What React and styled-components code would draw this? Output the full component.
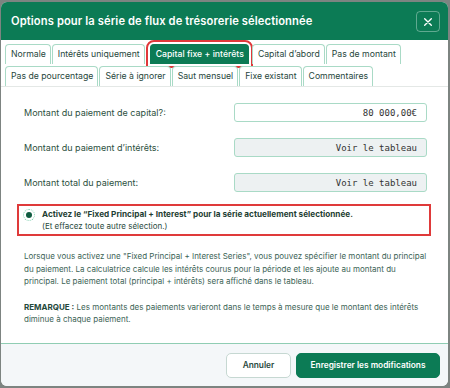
import React from 'react';
import styled, { createGlobalStyle } from 'styled-components';

const GlobalStyle = createGlobalStyle`
  html, body {
    margin: 0;
    padding: 0;
    background: #7d8481;
    font-family: Inter, "Noto Sans", sans-serif;
  }
`;

const Page = styled.div`
  width: 450px;
  height: 388px;
  padding: 2px 2px 2px 1px;
  box-sizing: border-box;
`;

const Modal = styled.div`
  height: 100%;
  background: #fff;
  border-radius: 6px;
  overflow: hidden;
  display: flex;
  flex-direction: column;
`;

const Header = styled.div`
  background: #0c7b55;
  height: 38px;
  display: flex;
  align-items: center;
  justify-content: space-between;
  padding: 0 8px 0 10px;
  flex: 0 0 auto;
`;

const Title = styled.h1`
  margin: 0;
  color: #fff;
  font-size: 11.2px;
  font-weight: 600;
  letter-spacing: 0.1px;
`;

const CloseButton = styled.button`
  width: 24px;
  height: 21px;
  border: 1px solid rgba(255, 255, 255, 0.35);
  border-radius: 4px;
  background: transparent;
  display: flex;
  align-items: center;
  justify-content: center;
  padding: 0;
  margin-top: 1px;
`;

const Tabs = styled.div`
  display: flex;
  flex-wrap: wrap;
  gap: 2px 1px;
  padding: 4px 4px 0 4px;
  border-bottom: 1px solid #e4e8e6;
`;

const Tab = styled.div`
  font-size: 8.7px;
  line-height: 13px;
  padding: 3px 4px 3px 5px;
  border: 1px solid ${p => (p.$active ? '#0c7b55' : '#a9dac6')};
  border-bottom: none;
  border-radius: 4px 4px 0 0;
  color: ${p => (p.$active ? '#fff' : '#27473c')};
  background: ${p => (p.$active ? '#0c7b55' : '#fff')};
  font-weight: ${p => (p.$active ? 500 : 400)};
  margin: ${p => (p.$active ? '0 2px 0 4px' : '0')};
  outline: ${p => (p.$active ? '2px solid #e0383a' : 'none')};
  outline-offset: 2px;
`;

const Body = styled.div`
  flex: 1;
  padding: 16px 21px 0 22px;
  display: flex;
  flex-direction: column;
`;

const FieldRow = styled.div`
  display: flex;
  align-items: center;
  justify-content: space-between;
  margin-bottom: 16px;
`;

const Label = styled.label`
  font-size: 9px;
  color: #2c5040;
  padding-left: 1px;
`;

const Field = styled.div`
  width: 182px;
  height: 17px;
  border: 1px solid #a9dac6;
  border-radius: 3px;
  background: ${p => (p.$readonly ? '#edf1f2' : '#fff')};
  font-family: "DejaVu Sans Mono", monospace;
  font-size: 9px;
  color: #333;
  display: flex;
  align-items: center;
  justify-content: flex-end;
  padding-right: 9px;
`;

const RadioBox = styled.div`
  margin: -4px -4px 0 -6px;
  border: 2px solid #df3a3a;
  padding: 2px 8px 2px 4px;
  display: flex;
  gap: 7px;
`;

const Radio = styled.span`
  width: 10px;
  height: 10px;
  border-radius: 50%;
  border: 1px dotted #7fcfae;
  display: flex;
  align-items: center;
  justify-content: center;
  flex: 0 0 auto;
  margin-top: 1px;
  &::after {
    content: '';
    width: 6px;
    height: 6px;
    border-radius: 50%;
    background: #0f5c40;
  }
`;

const RadioText = styled.div`
  display: flex;
  flex-direction: column;
`;

const RadioTitle = styled.div`
  font-size: 8.2px;
  font-weight: 700;
  color: #1f3f34;
  line-height: 13px;
`;

const RadioHint = styled.div`
  font-size: 8px;
  color: #2a4a3e;
  line-height: 11px;
`;

const Paragraph = styled.p`
  margin: ${p => p.$top || '14px'} 0 0 1px;
  font-size: 8px;
  line-height: 12.6px;
  color: #3c6456;
  strong {
    font-weight: 700;
    color: #24483b;
  }
`;

const Footer = styled.div`
  flex: 0 0 auto;
  height: 42px;
  border-top: 1px solid #8fcdb3;
  background: #f4f7f9;
  display: flex;
  justify-content: flex-end;
  align-items: center;
  gap: 5px;
  padding-right: 8px;
`;

const Button = styled.button`
  height: 25px;
  border-radius: 5px;
  font-family: Inter, "Noto Sans", sans-serif;
  font-size: 8.3px;
  font-weight: 600;
  border: 1px solid ${p => (p.$primary ? '#0c7b55' : '#c6d8d2')};
  background: ${p => (p.$primary ? '#0c7b55' : '#fff')};
  color: ${p => (p.$primary ? '#fff' : '#2a4a3e')};
  padding: 0;
  width: ${p => (p.$primary ? '144px' : '65px')};
`;

const tabs = [
  'Normale',
  'Intérêts uniquement',
  'Capital fixe + intérêts',
  'Capital d’abord',
  'Pas de montant',
  'Pas de pourcentage',
  'Série à ignorer',
  'Saut mensuel',
  'Fixe existant',
  'Commentaires',
];

export default function App() {
  return (
    <>
      <GlobalStyle />
      <Page>
        <Modal>
          <Header>
            <Title>Options pour la série de flux de trésorerie sélectionnée</Title>
            <CloseButton aria-label="Fermer">
              <svg width="10" height="10" viewBox="0 0 12 12">
                <path d="M2 2L10 10M10 2L2 10" stroke="#fff" strokeWidth="1.6" strokeLinecap="round" />
              </svg>
            </CloseButton>
          </Header>
          <Tabs>
            {tabs.map(t => (
              <Tab key={t} $active={t === 'Capital fixe + intérêts'}>
                {t}
              </Tab>
            ))}
          </Tabs>
          <Body>
            <FieldRow>
              <Label>Montant du paiement de capital?:</Label>
              <Field>80 000,00€</Field>
            </FieldRow>
            <FieldRow>
              <Label>Montant du paiement d’intérêts:</Label>
              <Field $readonly>Voir le tableau</Field>
            </FieldRow>
            <FieldRow>
              <Label>Montant total du paiement:</Label>
              <Field $readonly>Voir le tableau</Field>
            </FieldRow>
            <RadioBox>
              <Radio />
              <RadioText>
                <RadioTitle>
                  Activez le “Fixed Principal + Interest” pour la série actuellement sélectionnée.
                </RadioTitle>
                <RadioHint>(Et effacez toute autre sélection.)</RadioHint>
              </RadioText>
            </RadioBox>
            <Paragraph>
              Lorsque vous activez une "Fixed Principal + Interest Series", vous pouvez spécifier le
              montant du principal du paiement. La calculatrice calcule les intérêts courus pour la
              période et les ajoute au montant du principal. Le paiement total (principal + intérêts)
              sera affiché dans le tableau.
            </Paragraph>
            <Paragraph $top="13px">
              <strong>REMARQUE :</strong> Les montants des paiements varieront dans le temps à mesure
              que le montant des intérêts diminue à chaque paiement.
            </Paragraph>
          </Body>
          <Footer>
            <Button>Annuler</Button>
            <Button $primary>Enregistrer les modifications</Button>
          </Footer>
        </Modal>
      </Page>
    </>
  );
}
